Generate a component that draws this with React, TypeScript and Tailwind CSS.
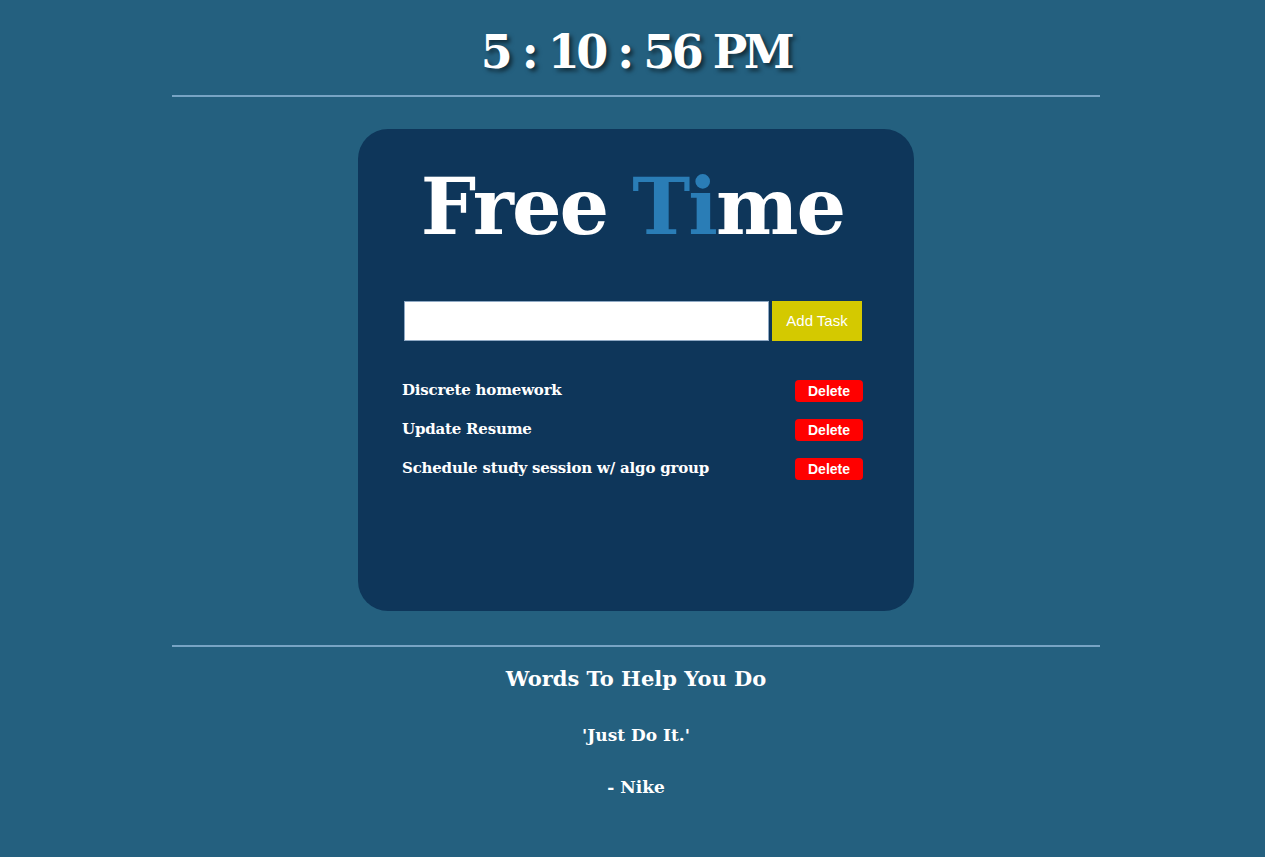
import { useState } from "react";

const slab = { fontFamily: '"DejaVu Serif", "Liberation Serif", serif' };

export default function App() {
  const [tasks, setTasks] = useState<string[]>([
    "Discrete homework",
    "Update Resume",
    "Schedule study session w/ algo group",
  ]);
  const [text, setText] = useState("");

  const addTask = () => {
    if (!text.trim()) return;
    setTasks([...tasks, text.trim()]);
    setText("");
  };

  return (
    <div className="min-h-[857px] w-full bg-[#24607f] text-white" style={slab}>
      <div className="pl-[7px]">
        <div className="flex h-[95px] items-center justify-center pt-[8px]">
          <h1 className="text-[46px] font-bold leading-none tracking-[-3.5px] [text-shadow:3px_3px_4px_rgba(0,0,0,0.55)]">
            5 : 10 : 56 PM
          </h1>
        </div>
        <div className="mx-auto h-[2px] w-[928px] bg-[#78a4c4]" />

        <div className="mx-auto mt-[32px] flex h-[482px] w-[556px] flex-col rounded-[30px] bg-[#0e365a] pl-[44px] pr-[51px]">
          <h2 className="mt-[33px] text-center text-[78px] font-bold leading-[90px] tracking-[-2px]">
            Free <span className="text-[#2a7db6]">Ti</span>me
          </h2>

          <div className="mt-[49px] flex items-center gap-[3px] pl-[2px]">
            <input
              value={text}
              onChange={(e) => setText(e.target.value)}
              className="h-[40px] w-[365px] border border-[#8fa9c4] bg-white px-2 text-black outline-none"
            />
            <button
              onClick={addTask}
              className="h-[40px] w-[90px] bg-[#d4c900] text-[15px] text-white"
              style={{ fontFamily: '"Liberation Sans", Arial, sans-serif' }}
            >
              Add Task
            </button>
          </div>

          <ul className="mt-[38px] flex flex-col gap-[17px]">
            {tasks.map((t, i) => (
              <li key={i} className="flex h-[22px] items-center justify-between">
                <span className="text-[15px] font-bold tracking-[-0.2px]">{t}</span>
                <button
                  onClick={() => setTasks(tasks.filter((_, j) => j !== i))}
                  className="h-[22px] w-[68px] translate-y-[1px] rounded-[4px] bg-[#ff0000] text-[14px] font-bold text-white"
                  style={{ fontFamily: '"Liberation Sans", Arial, sans-serif' }}
                >
                  Delete
                </button>
              </li>
            ))}
          </ul>
        </div>

        <div className="mx-auto mt-[34px] h-[2px] w-[928px] bg-[#78a4c4]" />

        <div className="flex flex-col items-center">
          <h3 className="mt-[17px] text-[21px] font-bold leading-[30px]">Words To Help You Do</h3>
          <p className="mt-[28px] text-[17px] font-bold leading-[26px]">'Just Do It.'</p>
          <p className="mt-[26px] text-[17px] font-bold leading-[26px]">- Nike</p>
        </div>
      </div>
    </div>
  );
}
